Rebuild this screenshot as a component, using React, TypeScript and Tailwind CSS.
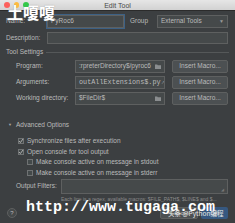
import React from 'react';

// Compact dark "Edit Tool" dialog, with watermark overlays
const label = 'text-[6.5px] leading-none text-[#bbbbbb] whitespace-nowrap';

function Field({ className, children }: { className: string; children?: React.ReactNode }) {
  return (
    <div className={`flex items-center border border-[#5e6060] bg-[#45494a] px-[3px] text-[6.5px] leading-none text-[#bbbbbb] overflow-hidden whitespace-nowrap ${className}`}>
      {children}
    </div>
  );
}

function MacroButton() {
  return (
    <div className="ml-[7px] flex h-[13px] w-[56px] items-center justify-center rounded-[2px] border border-[#5e6060] bg-[#4c5052] text-[6.5px] leading-none text-[#bbbbbb]">
      Insert Macro...
    </div>
  );
}

function Folder() {
  return (
    <svg width="6" height="5" viewBox="0 0 6 5" className="ml-auto shrink-0">
      <path d="M0 0.5h2.2l0.6 0.8H6V5H0z" fill="#8a8d8f" />
    </svg>
  );
}

interface CheckProps {
  text: string;
  checked?: boolean;
  indent: string;
}

function Check({ text, checked, indent }: CheckProps) {
  return (
    <div className={`flex h-[10.5px] items-center ${indent}`}>
      <div className="relative mr-[3px] h-[6px] w-[6px] border border-[#6f7273] bg-[#43494a]">
        {checked && (
          <svg width="6" height="6" viewBox="0 0 6 6" className="absolute left-[-1px] top-[-1px]">
            <path d="M1 3l1.4 1.5L5 1" stroke="#bbbbbb" strokeWidth="0.9" fill="none" />
          </svg>
        )}
      </div>
      <span className={label}>{text}</span>
    </div>
  );
}

export default function App() {
  return (
    <div className="relative h-[223px] w-[235px] overflow-hidden bg-[#3c3f41] font-['Liberation_Sans',sans-serif]">
      {/* title bar */}
      <div className="relative flex h-[11px] items-center bg-gradient-to-b from-[#e6e6e6] to-[#d2d2d2] border-b border-[#2b2b2b]">
        <div className="ml-[4px] h-[5.5px] w-[5.5px] rounded-full bg-[#fc605c]" />
        <div className="ml-[4px] h-[5.5px] w-[5.5px] rounded-full bg-[#fdbc40]" />
        <div className="ml-[4px] h-[5.5px] w-[5.5px] rounded-full bg-[#34c84a]" />
        <div className="absolute inset-x-0 top-[2px] text-center text-[7px] leading-none text-[#4a4a4a]">Edit Tool</div>
      </div>

      {/* name / group */}
      <div className="mt-[4px] flex items-center pl-[6px]">
        <span className={`${label} w-[41px]`}>Name:</span>
        <Field className="h-[13px] w-[77px] border-[#4a78a8] shadow-[0_0_0_1px_#3d6185]">PyRoc6</Field>
        <span className={`${label} ml-[6px] w-[27px]`}>Group</span>
        <Field className="h-[13px] w-[71px] bg-[#3c3f41]">
          External Tools
          <span className="ml-auto text-[5px] text-[#999]">▼</span>
        </Field>
      </div>

      {/* description */}
      <div className="mt-[4px] flex items-center pl-[6px]">
        <span className={`${label} w-[41px]`}>Description:</span>
        <Field className="h-[12px] w-[181px]" />
      </div>

      {/* tool settings */}
      <div className="mt-[5px] flex items-center pl-[6px]">
        <span className={label}>Tool Settings</span>
        <div className="ml-[3px] h-px w-[183px] bg-[#555859]" />
      </div>

      <div className="mt-[4px] flex flex-col gap-[3px] pl-[16px]">
        <div className="flex items-center">
          <span className={`${label} w-[59px]`}>Program:</span>
          <Field className="h-[13px] w-[90px]">
            :rpreterDirectory$/pyroc6
            <Folder />
          </Field>
          <MacroButton />
        </div>
        <div className="flex items-center">
          <span className={`${label} w-[59px]`}>Arguments:</span>
          <Field className="h-[13px] w-[90px]">
            <span className="font-['Liberation_Mono',monospace] text-[6.8px]">outAllExtensions$.py</span>
            <span className="ml-auto text-[5px] text-[#8a8d8f]">↗</span>
          </Field>
          <MacroButton />
        </div>
        <div className="flex items-center">
          <span className={`${label} w-[59px]`}>Working directory:</span>
          <Field className="h-[13px] w-[90px]">
            $FileDir$
            <Folder />
          </Field>
          <MacroButton />
        </div>
      </div>

      {/* advanced */}
      <div className="mt-[17px] flex items-center pl-[8px]">
        <span className="mr-[4px] text-[4px] leading-none text-[#aaaaaa]">▼</span>
        <span className={label}>Advanced Options</span>
      </div>
      <div className="mt-[8px] flex flex-col">
        <Check checked indent="pl-[18px]" text="Synchronize files after execution" />
        <Check checked indent="pl-[18px]" text="Open console for tool output" />
        <Check indent="pl-[27px]" text="Make console active on message in stdout" />
        <Check indent="pl-[27px]" text="Make console active on message in stderr" />
      </div>

      {/* output filters */}
      <div className="mt-[1px] flex items-center pl-[16px]">
        <span className={`${label} w-[45px]`}>Output Filters:</span>
        <Field className="h-[15px] w-[167px] justify-end items-end">
          <span className="mb-[1px] text-[4px] text-[#777]">◢</span>
        </Field>
      </div>
      <div className="mt-[3px] pl-[61px] text-[5px] leading-none text-[#8b8b8b] whitespace-nowrap">
        Each line is a regex, available macros: $FILE_PATH$, $LINE$ and $...
      </div>

      {/* bottom bar */}
      <div className="mt-[5px] flex items-center pl-[7px] pr-[7px]">
        <div className="flex h-[10px] w-[10px] items-center justify-center rounded-full border border-[#5e6060] bg-[#45494a] text-[6px] leading-none text-[#bbbbbb]">?</div>
        <div className="ml-auto flex h-[12px] w-[38px] items-center justify-center rounded-[2px] border border-[#5e6060] bg-[#4c5052] text-[6px] text-[#bbbbbb]">Cancel</div>
        <div className="ml-[3px] flex h-[12px] w-[27px] items-center justify-center rounded-[2px] bg-[#365880] text-[6px] text-[#dddddd]">OK</div>
      </div>

      {/* watermarks */}
      <div className="absolute left-[7px] top-[4px] text-[16px] font-bold leading-none text-white font-['Noto_Sans_CJK_SC',sans-serif] [text-shadow:0_0_1px_#888]">
        土嗄嗄
      </div>
      <div className="absolute left-[26px] top-[200px] text-[15px] font-bold leading-none text-white font-['Liberation_Mono',monospace] whitespace-nowrap">
        http://www.tugaga.com
      </div>
      <div className="absolute left-[168px] top-[210px] text-[6.5px] leading-none text-[#e8e8e8] whitespace-nowrap font-['Noto_Sans_CJK_SC',sans-serif]">
        头条 @Python编程
      </div>
    </div>
  );
}
